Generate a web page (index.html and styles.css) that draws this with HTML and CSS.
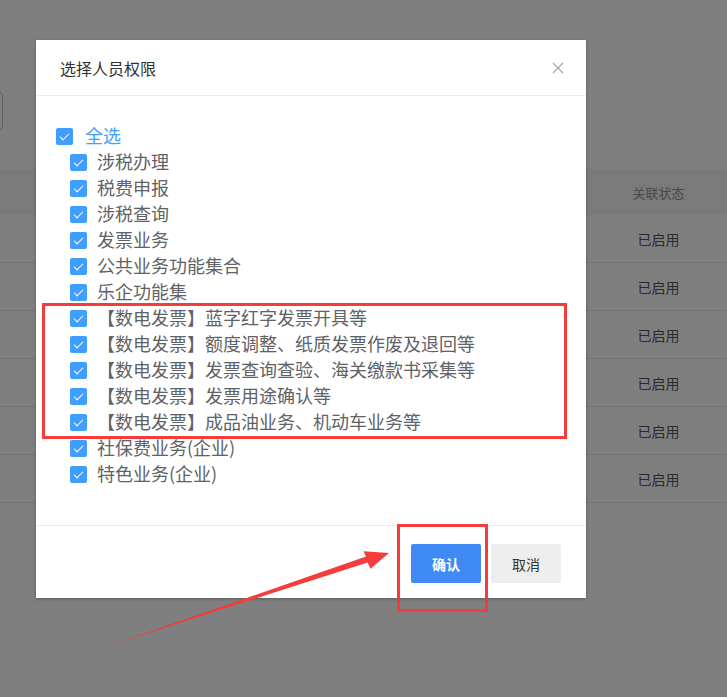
FILE: index.html
```html
<!DOCTYPE html>
<html lang="zh-CN">

<head>
    <meta charset="UTF-8">
    <meta name="viewport" content="width=device-width, initial-scale=1.0">
    <title>选择人员权限</title>
    <link rel="stylesheet" href="styles.css">
</head>

<body>
    <div class="page">
        <div class="toolbar">
            <div class="search"></div>
        </div>
        <div class="table">
            <div class="tr th"><div></div><div class="cell">关联状态</div></div>
            <div class="tr"><div></div><div class="cell">已启用</div></div>
            <div class="tr"><div></div><div class="cell">已启用</div></div>
            <div class="tr"><div></div><div class="cell">已启用</div></div>
            <div class="tr"><div></div><div class="cell">已启用</div></div>
            <div class="tr"><div></div><div class="cell">已启用</div></div>
            <div class="tr"><div></div><div class="cell">已启用</div></div>
        </div>
    </div>

    <!-- 遮盖层 -->
    <div class="mask"></div>

    <div class="dialog">
        <div class="dialog-title">
            <span>选择人员权限</span>
            <a class="close" href="javascript:">
                <svg width="12" height="12" viewBox="0 0 12 12"><path d="M1 1L11 11M11 1L1 11" stroke="#a3a6ad" stroke-width="1.2" fill="none"/></svg>
            </a>
        </div>

        <div class="dialog-content">
            <label class="check all"><i class="box"></i><span>全选</span></label>
            <div class="group">
                <label class="check"><i class="box"></i><span>涉税办理</span></label>
                <label class="check"><i class="box"></i><span>税费申报</span></label>
                <label class="check"><i class="box"></i><span>涉税查询</span></label>
                <label class="check"><i class="box"></i><span>发票业务</span></label>
                <label class="check"><i class="box"></i><span>公共业务功能集合</span></label>
                <label class="check"><i class="box"></i><span>乐企功能集</span></label>
                <label class="check"><i class="box"></i><span>【数电发票】蓝字红字发票开具等</span></label>
                <label class="check"><i class="box"></i><span>【数电发票】额度调整、纸质发票作废及退回等</span></label>
                <label class="check"><i class="box"></i><span>【数电发票】发票查询查验、海关缴款书采集等</span></label>
                <label class="check"><i class="box"></i><span>【数电发票】发票用途确认等</span></label>
                <label class="check"><i class="box"></i><span>【数电发票】成品油业务、机动车业务等</span></label>
                <label class="check"><i class="box"></i><span>社保费业务(企业)</span></label>
                <label class="check"><i class="box"></i><span>特色业务(企业)</span></label>
            </div>
        </div>

        <div class="dialog-footer">
            <a class="btn btn-primary" href="javascript:">确认</a>
            <a class="btn btn-cancel" href="javascript:">取消</a>
        </div>
    </div>

    <!-- 标注 -->
    <div class="mark mark-list"></div>
    <div class="mark mark-btn"></div>
    <svg class="arrow" width="727" height="697" viewBox="0 0 727 697">
        <polygon points="108,646 367.6,562.4 370.5,568.8 389,553 363.5,551.3 366,556.6" fill="#f53c3c"/>
    </svg>
</body>

</html>
```

FILE: styles.css
```css
* {
    padding: 0;
    margin: 0;
    box-sizing: border-box;
}

body {
    width: 727px;
    height: 697px;
    overflow: hidden;
    background: #ffffff;
    font-family: "Noto Sans CJK SC", "Liberation Sans", sans-serif;
    position: relative;
}

a {
    text-decoration: none;
    color: #333333;
}

/* 背景页面 */
.page {
    width: 727px;
    height: 697px;
}

.toolbar {
    padding-top: 92px;
    height: 169px;
}

.search {
    width: 200px;
    height: 38px;
    margin-left: -197px;
    border: 1px solid #c0c4cc;
    border-radius: 4px;
}

.tr {
    display: grid;
    grid-template-columns: 1fr 137px;
    height: 48px;
    border-bottom: 1px solid #e8e8e8;
    font-size: 14px;
    color: #555555;
}

.tr.th {
    height: 46px;
    background: #f4f4f4;
    color: #909399;
    font-size: 13px;
    border-bottom: 0;
}

.cell {
    display: flex;
    align-items: center;
    justify-content: center;
}

.mask {
    position: absolute;
    top: 0;
    left: 0;
    width: 100%;
    height: 100%;
    background: rgba(0, 0, 0, .5);
}

/* 弹框 */
.dialog {
    position: absolute;
    left: 36px;
    top: 40px;
    width: 550px;
    height: 558px;
    background: #ffffff;
    box-shadow: 0 1px 3px rgba(0, 0, 0, .3);
    display: flex;
    flex-direction: column;
}

.dialog-title {
    height: 56px;
    padding: 0 22px 0 24px;
    border-bottom: 1px solid #ebeef5;
    display: flex;
    align-items: center;
    justify-content: space-between;
    font-size: 16px;
    color: #303133;
}

.close {
    display: flex;
    width: 12px;
    height: 12px;
}

.dialog-content {
    height: 430px;
    padding: 26px 20px 0 20px;
    border-bottom: 1px solid #ebeef5;
}

.group {
    padding-left: 14px;
}

.check {
    display: flex;
    align-items: center;
    height: 26px;
    font-size: 18px;
    line-height: 26px;
    color: #606266;
    cursor: pointer;
}

.check span {
    margin-left: 10px;
}

.check.all span {
    margin-left: 12px;
    color: #409eff;
}

.box {
    position: relative;
    display: block;
    flex: none;
    width: 17px;
    height: 17px;
    margin-top: 2px;
    border-radius: 2px;
    background: #409eff;
}

.box::after {
    content: "";
    position: absolute;
    left: 6px;
    top: 3px;
    width: 4px;
    height: 8px;
    border: 1px solid #ffffff;
    border-left: 0;
    border-top: 0;
    transform: rotate(45deg);
}

.dialog-footer {
    flex: 1;
    display: flex;
    justify-content: flex-end;
    gap: 10px;
    padding: 18px 25px 0 0;
}

.btn {
    display: flex;
    align-items: center;
    justify-content: center;
    width: 70px;
    height: 39px;
    border-radius: 2px;
    font-size: 14px;
}

.btn-primary {
    background: #3f8af5;
    color: #ffffff;
    font-weight: bold;
}

.btn-cancel {
    background: #eeeeee;
    color: #333333;
}

/* 红色标注 */
.mark {
    position: absolute;
    border: 3px solid #f53c3c;
}

.mark-list {
    left: 42px;
    top: 303px;
    width: 525px;
    height: 136px;
}

.mark-btn {
    left: 397px;
    top: 524px;
    width: 91px;
    height: 88px;
}

.arrow {
    position: absolute;
    left: 0;
    top: 0;
}
```
